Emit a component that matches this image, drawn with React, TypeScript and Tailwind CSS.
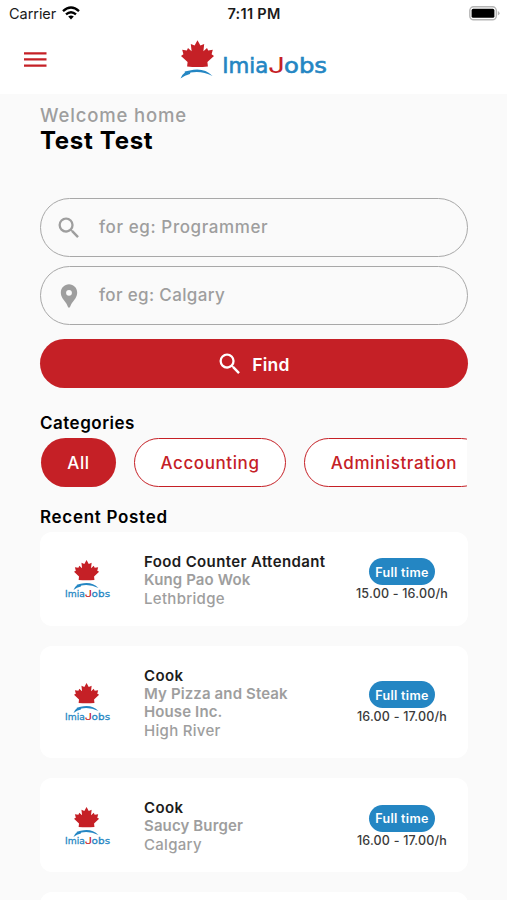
import { MdLocationPin, MdSearch } from 'react-icons/md';

const jobs = [
  {
    title: 'Food Counter Attendant',
    company: ['Kung Pao Wok'],
    city: 'Lethbridge',
    pay: '15.00 - 16.00/h',
  },
  {
    title: 'Cook',
    company: ['My Pizza and Steak', 'House Inc.'],
    city: 'High River',
    pay: '16.00 - 17.00/h',
  },
  {
    title: 'Cook',
    company: ['Saucy Burger'],
    city: 'Calgary',
    pay: '16.00 - 17.00/h',
  },
];

const LEAF =
  'M16.5 0L19.4 5.2L23.2 3.6L22.4 11L26 7.6L27.2 10.2L31.8 9.4L30.6 14L33 15.6L26.4 21.6L26.9 26.2Q16.5 27.2 6.1 26.2L6.6 21.6L0 15.6L2.4 14L1.2 9.4L5.8 10.2L7 7.6L10.6 11L9.8 3.6L13.6 5.2Z';

const SWOOSH =
  'M0 38.5Q1.2 34.6 4.4 32.4L4.2 31.6L9.2 30.6Q23 27 32 36Q21 30.4 10 32.6L9.4 34Q4.4 35 0 38.5Z';

const Wordmark = () => (
  <g fontSize="20.5" fill="#2486c3" stroke="#2486c3" strokeWidth="0.6" fontFamily="'DejaVu Sans', sans-serif">
    <text x="-0.8" y="0" textLength="46" lengthAdjust="spacingAndGlyphs">
      Imia
    </text>
    <text
      x="45"
      y="0"
      fontSize="21"
      fontFamily="Inter, sans-serif"
      fill="#c52026"
      stroke="none"
      textLength="17"
      lengthAdjust="spacingAndGlyphs"
    >
      J
    </text>
    <text x="61" y="0" textLength="43" lengthAdjust="spacingAndGlyphs">
      obs
    </text>
  </g>
);

const HeaderLogo = () => (
  <svg width="150" height="42" viewBox="0 0 150 42">
    <path d={LEAF} transform="translate(1 0.3)" fill="#c52026" />
    <path d={SWOOSH} transform="translate(0.5 0)" fill="#2486c3" />
    <g transform="translate(43 33.4)">
      <Wordmark />
    </g>
  </svg>
);

const CardLogo = () => (
  <svg width="46" height="40" viewBox="0 0 46 40">
    <path d={LEAF} transform="translate(9 0) scale(0.76)" fill="#c52026" />
    <path d={SWOOSH} transform="translate(8.5 0) scale(0.78)" fill="#2486c3" />
    <g transform="translate(0.4 36.6) scale(0.43)">
      <Wordmark />
    </g>
  </svg>
);

const MenuIcon = () => (
  <svg className="mt-2.5 ml-1" width="23" height="20" viewBox="0 0 23 20" stroke="#c52026" strokeWidth="2.3">
    <path d="M0 3.3H22.5M0 9.4H22.5M0 15.6H22.5" />
  </svg>
);

const StatusBar = () => (
  <div className="grid h-7 grid-cols-3 items-center pr-[7px] pl-[9px] text-[14.5px] text-[#1a1a1a]">
    <div className="flex items-center gap-1.5">
      <span className="tracking-[-0.05px]">Carrier</span>
      <svg className="-mt-0.5" width="18" height="14" viewBox="0 0 18 14" fill="none" stroke="#000" strokeWidth="2.4">
        <path d="M1 5.2Q9 -2 17 5.2" />
        <path d="M4 8.4Q9 4 14 8.4" />
        <path d="M6.2 10.6Q9 8.4 11.8 10.6L9 13.6Z" fill="#000" stroke="none" />
      </svg>
    </div>
    <span className="-ml-px text-center font-semibold tracking-[0.3px]">7:11 PM</span>
    <svg className="-mt-0.5 ml-auto" width="31" height="15" viewBox="0 0 31 15">
      <rect x="0.8" y="0.8" width="26.5" height="13" rx="3.8" fill="#fff" stroke="#b5b5b5" strokeWidth="1.4" />
      <rect x="2.6" y="2.8" width="22.8" height="9" rx="1.6" fill="#000" />
      <path d="M28.8 5V9.6Q30.6 8.8 30.6 7.3T28.8 5Z" fill="#b5b5b5" />
    </svg>
  </div>
);

const JobCard = ({ job }: { job: (typeof jobs)[number] }) => (
  <div className="flex shrink-0 items-center rounded-xl bg-white pt-[21px] pr-5 pb-[18px] pl-[25px]">
    <CardLogo />
    <div className="ml-[33px] flex-1 text-[15px] leading-[18.3px] whitespace-nowrap text-[#9e9e9e]">
      <h3 className="font-semibold tracking-[0.38px] text-[#1c1c1c]">{job.title}</h3>
      {job.company.map((line) => (
        <p key={line} className="font-semibold tracking-[0.12px]">
          {line}
        </p>
      ))}
      <p className="font-medium tracking-[0.3px]">{job.city}</p>
    </div>
    <div className="flex w-[92px] flex-col items-center">
      <span className="flex h-[27px] w-[66px] items-center justify-center rounded-full bg-[#2486c3] pt-0.5 text-[12.5px] font-semibold tracking-[0.3px] whitespace-nowrap text-white">
        Full time
      </span>
      <span className="text-[12.5px] leading-[17px] font-medium tracking-[0.2px] whitespace-nowrap text-[#3a3a3a]">
        {job.pay}
      </span>
    </div>
  </div>
);

export default function App() {
  return (
    <div className="flex h-[900px] w-[507px] flex-col overflow-hidden bg-[#fafafa] font-['Inter',sans-serif]">
      <header className="h-[94px] shrink-0 bg-white">
        <StatusBar />
        <div className="grid grid-cols-[1fr_auto_1fr] items-start pt-3 pr-[17px] pl-5">
          <MenuIcon />
          <HeaderLogo />
        </div>
      </header>

      <main className="flex min-h-0 flex-1 flex-col pt-[9px] pr-[39px] pl-10">
        <p className="text-[18.5px] leading-6 font-medium tracking-[0.85px] text-[#9e9e9e]">Welcome home</p>
        <h1 className="text-2xl leading-[27px] font-bold tracking-[0.7px] text-black">Test Test</h1>

        <div className="mt-11 flex flex-col gap-[9px]">
          <div className="flex h-[59px] items-center gap-4 rounded-full border-[1.5px] border-[#a8a8a8] pl-[14px]">
            <MdSearch className="size-7 text-[#9e9e9e]" />
            <span className="text-[17px] font-medium tracking-[0.6px] text-[#9e9e9e]">for eg: Programmer</span>
          </div>
          <div className="flex h-[59px] items-center gap-4 rounded-full border-[1.5px] border-[#a8a8a8] pl-[14px]">
            <MdLocationPin className="size-7 text-[#9e9e9e]" />
            <span className="pt-px text-[17px] font-medium tracking-[0.35px] text-[#9e9e9e]">for eg: Calgary</span>
          </div>
        </div>

        <button className="mt-3.5 flex h-[49px] shrink-0 items-center justify-center gap-2 rounded-full bg-[#c52026] pr-0.5 text-white">
          <MdSearch className="size-7" />
          <span className="pt-[3px] text-[17.5px] font-semibold tracking-[0.2px]">Find</span>
        </button>

        <h2 className="mt-[23px] text-[17px] leading-6 font-semibold tracking-[0.5px] text-black">Categories</h2>
        <div className="mt-[3px] mr-px flex shrink-0 gap-[18px] overflow-hidden pl-px text-[17px] font-medium tracking-[0.6px] whitespace-nowrap">
          <span className="flex h-[49px] w-[75px] shrink-0 items-center justify-center rounded-full bg-[#c52026] pt-0.5 text-white">
            All
          </span>
          <span className="flex h-[49px] w-[152px] shrink-0 items-center justify-center rounded-full border-[1.5px] border-[#c52026] bg-white pt-0.5 text-[#c52026]">
            Accounting
          </span>
          <span className="flex h-[49px] w-[182px] shrink-0 items-center justify-center rounded-full border-[1.5px] border-[#c52026] bg-white pt-0.5 pr-0.5 text-[#c52026]">
            Administration
          </span>
        </div>

        <h2 className="mt-[18px] text-[17px] leading-6 font-semibold tracking-[0.7px] text-black">Recent Posted</h2>
        <div className="mt-[3px] flex min-h-0 flex-1 flex-col gap-5">
          {jobs.map((job, i) => (
            <JobCard key={i} job={job} />
          ))}
          <div className="h-24 shrink-0 rounded-xl bg-white" />
        </div>
      </main>
    </div>
  );
}
